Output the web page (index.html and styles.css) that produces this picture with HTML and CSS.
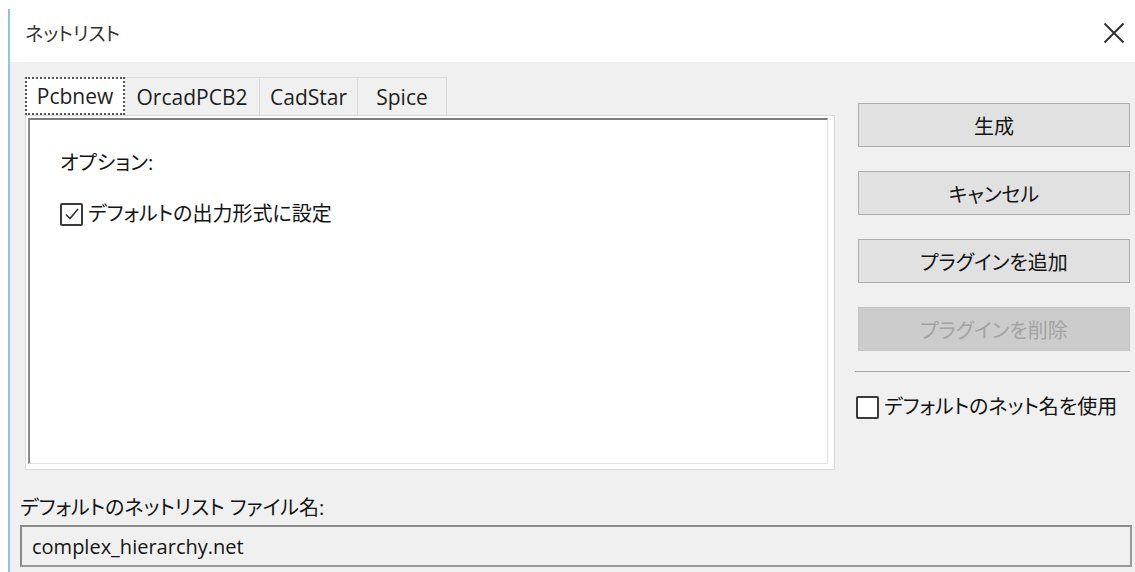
FILE: index.html
```html
<!DOCTYPE html>
<html lang="ja">
<head>
<meta charset="utf-8">
<title>ネットリスト</title>
<link rel="stylesheet" href="styles.css">
</head>
<body>
<div class="window">
  <div class="titlebar">
    <span class="title">ネットリスト</span>
    <svg class="close" width="22" height="22" viewBox="0 0 22 22" aria-label="閉じる">
      <path d="M1.5 1.5 L20.5 20.5 M20.5 1.5 L1.5 20.5" stroke="#2b2b2b" stroke-width="1.8" fill="none"/>
    </svg>
  </div>
  <div class="client">
    <div class="main">
      <div class="notebook">
        <div class="tabs">
          <div class="tab active">Pcbnew</div>
          <div class="tab">OrcadPCB2</div>
          <div class="tab">CadStar</div>
          <div class="tab">Spice</div>
        </div>
        <div class="page">
          <div class="inset">
            <div class="opt-label">オプション:</div>
            <label class="check">
              <span class="box">
                <svg width="18" height="18" viewBox="0 0 18 18"><path d="M3 9.5 L7 13.5 L15 4" stroke="#333" stroke-width="1.6" fill="none"/></svg>
              </span>
              <span>デフォルトの出力形式に設定</span>
            </label>
          </div>
        </div>
      </div>
      <div class="side">
        <button class="btn">生成</button>
        <button class="btn">キャンセル</button>
        <button class="btn">プラグインを追加</button>
        <button class="btn disabled">プラグインを削除</button>
        <div class="sep"></div>
        <label class="check side-check">
          <span class="box"></span>
          <span>デフォルトのネット名を使用</span>
        </label>
      </div>
    </div>
    <div class="file-label">デフォルトのネットリスト ファイル名:</div>
    <div class="file-input">complex_hierarchy.net</div>
  </div>
</div>
</body>
</html>
```

FILE: styles.css
```css
html, body {
  margin: 0;
  padding: 0;
}

body {
  width: 1135px;
  height: 572px;
  overflow: hidden;
  background: #ffffff;
  font-family: "Open Sans", "Noto Sans CJK JP", sans-serif;
  font-size: 20px;
  color: #141414;
  font-feature-settings: "palt";
}

.window {
  margin-left: 8px;
  margin-top: 9px;
  height: 563px;
  border-left: 2px solid #8cc3ec;
  display: flex;
  flex-direction: column;
}

/* title bar */
.titlebar {
  height: 53px;
  flex: none;
  display: flex;
  align-items: center;
  justify-content: space-between;
  padding: 0 10px 5px 15px;
  box-sizing: border-box;
  background: #ffffff;
}

.title {
  font-size: 19px;
  color: #333333;
}

.close {
  display: block;
}

/* dialog body */
.client {
  flex: 1;
  background: #f0f0f0;
  padding: 15px 3px 5px 10px;
  display: flex;
  flex-direction: column;
}

.main {
  display: flex;
  gap: 23px;
  margin-left: 5px;
  margin-right: 2px;
}

/* notebook */
.notebook {
  width: 810px;
  flex: none;
}

.tabs {
  display: flex;
  height: 38px;
}

.tab {
  box-sizing: border-box;
  height: 38px;
  padding: 0;
  display: flex;
  align-items: center;
  justify-content: center;
  border: 1px solid #dadada;
  border-bottom: none;
  border-left: none;
  background: #f0f0f0;
  font-size: 21px;
  color: #1e1e1e;
}

.tab.active {
  width: 100px;
  background: #ffffff;
  border: 2px dotted #555555;
}

.tab:nth-child(2) { width: 135px; }
.tab:nth-child(3) { width: 98px; }
.tab:nth-child(4) { width: 89px; }

.page {
  height: 355px;
  box-sizing: border-box;
  background: #ffffff;
  border: 1px solid #d9d9d9;
  padding: 2px 6px 5px 2px;
  display: flex;
}

.inset {
  flex: 1;
  border-top: 2px solid #7d7d7d;
  border-left: 2px solid #8a8a8a;
  border-right: 1px solid #e2e2e2;
  border-bottom: 1px solid #e2e2e2;
  padding: 30px 30px;
}

.opt-label {
  line-height: 26px;
  margin-bottom: 25px;
}

.check {
  display: flex;
  align-items: center;
  gap: 5px;
  line-height: 26px;
}

.box {
  width: 23px;
  height: 23px;
  box-sizing: border-box;
  border: 2px solid #3a3a3a;
  border-radius: 2px;
  background: #ffffff;
  display: flex;
  align-items: center;
  justify-content: center;
  flex: none;
}

/* right-hand buttons */
.side {
  flex: 1;
  padding-top: 26px;
  display: flex;
  flex-direction: column;
}

.btn {
  height: 44px;
  margin: 0 0 24px 0;
  background: #e1e1e1;
  border: 1px solid #adadad;
  font-family: inherit;
  font-size: 20px;
  font-feature-settings: "palt";
  color: #141414;
  padding: 0;
}

.btn.disabled {
  background: #cccccc;
  border-color: #c4c4c4;
  color: #a3a3a3;
}

.btn:nth-of-type(4) {
  margin-bottom: 20px;
}

.sep {
  height: 1px;
  background: #a8a8a8;
  margin-left: -3px;
  margin-bottom: 22px;
}

.side-check {
  margin-left: -2px;
}

/* file name field */
.file-label {
  margin-top: 25px;
  line-height: 25px;
  height: 25px;
  margin-bottom: 5px;
}

.file-input {
  height: 42px;
  box-sizing: border-box;
  border: 2px solid #9a9a9a;
  border-top-color: #8a8a8a;
  border-left-color: #8a8a8a;
  background: #f0f0f0;
  padding-left: 10px;
  display: flex;
  align-items: center;
  font-size: 20px;
  color: #141414;
}
```
